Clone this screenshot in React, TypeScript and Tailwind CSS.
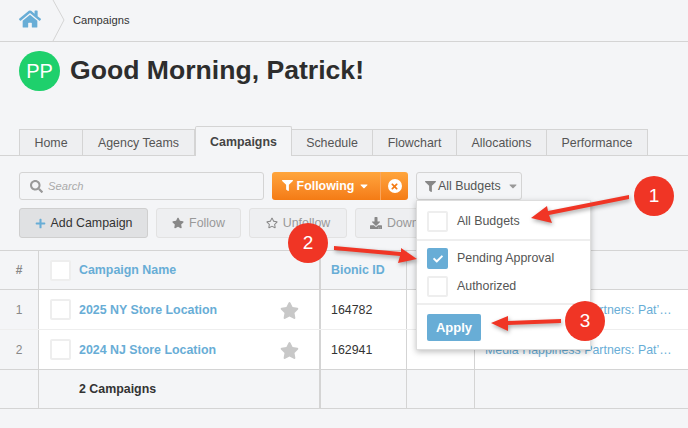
import React from 'react';
import { FaHome, FaFilter, FaSearch, FaPlus, FaStar, FaRegStar, FaDownload, FaCheck, FaTimes, FaCaretDown } from 'react-icons/fa';

const TABS = [
  { label: 'Home', w: 'w-[64px]' },
  { label: 'Agency Teams', w: 'w-[112px]' },
  { label: 'Campaigns', w: 'w-[97px]' },
  { label: 'Schedule', w: 'w-[81px]' },
  { label: 'Flowchart', w: 'w-[84px]' },
  { label: 'Allocations', w: 'w-[90px]' },
  { label: 'Performance', w: 'w-[101px]' },
];

const ROWS = [
  { n: 1, name: '2025 NY Store Location', id: '164782' },
  { n: 2, name: '2024 NJ Store Location', id: '162941' },
];

const COLS = 'grid grid-cols-[39px_282px_86px_68px_1fr]';
const AGENCY = 'Media Happiness Partners: Pat’…';

const Check = ({ on = false }: { on?: boolean }) => (
  <div className={`w-[21px] h-[21px] shrink-0 rounded-[2px] flex items-center justify-center border-2 ${on ? 'bg-[#68add6] border-[#68add6]' : 'bg-white border-[#eeeeee]'}`}>
    {on && <FaCheck className="text-white text-[10px]" />}
  </div>
);

const Badge = ({ n, x, y }: { n: number; x: string; y: string }) => (
  <div className={`absolute ${x} ${y} w-10 h-10 rounded-full bg-[#f03525] text-white text-[19px] flex items-center justify-center`}>{n}</div>
);

export default function App() {
  return (
    <div className="relative w-[688px] h-[428px] overflow-hidden bg-[#f4f5f7] text-[#333] text-[12.4px] font-['Liberation_Sans',Arial,sans-serif]">
      {/* Breadcrumb */}
      <div className="h-[42px] border-b border-[#d4d4d4] flex items-center">
        <div className="w-[53px] h-full flex items-center pl-[19px] relative">
          <FaHome className="text-[#68add6] text-[22px] -mt-[4px]" />
          <svg className="absolute left-[52px] top-0" width="14" height="41" viewBox="0 0 14 41" fill="none">
            <path d="M1 0L12 20L1 41" stroke="#d4d4d4" strokeWidth="1" />
          </svg>
        </div>
        <span className="ml-5 text-[11.2px] text-[#333]">Campaigns</span>
      </div>

      {/* Greeting */}
      <div className="h-[84px] pl-[19px] pt-[9px] flex items-start gap-[10px]">
        <div className="w-[41px] h-10 rounded-full bg-[#1ed06c] text-white text-[20px] flex items-center justify-center">PP</div>
        <h1 className="text-[26.6px] leading-[38px] font-bold text-[#2d2d2d]">Good Morning, Patrick!</h1>
      </div>

      {/* Tabs */}
      <div className="h-[30px] border-b border-[#d4d4d4] pl-[19px] flex items-end">
        {TABS.map((t) => t.label === 'Campaigns' ? (
          <div key={t.label} className={`${t.w} h-[30px] -mb-px pt-[2px] bg-[#f4f5f7] border border-b-0 border-[#d4d4d4] rounded-t-[2px] flex items-center justify-center font-bold text-[#444]`}>{t.label}</div>
        ) : (
          <div key={t.label} className={`${t.w} h-[26px] pt-[2px] bg-[#eeeff1] border border-l-0 first:border-l border-b-0 border-[#d4d4d4] flex items-center justify-center text-[#555]`}>{t.label}</div>
        ))}
      </div>

      {/* Filters */}
      <div className="pl-[19px] pt-[16px] flex items-start">
        <div className="w-[245px] h-[28px] bg-[#f4f5f7] border border-[#d4d4d4] rounded-[3px] flex items-center pl-[10px] gap-[5px]">
          <FaSearch className="text-[#999] text-[13px]" />
          <span className="italic text-[#aaa] text-[11.2px]">Search</span>
        </div>
        <div className="ml-2 h-[28px] w-[136px] rounded-[3px] bg-gradient-to-b from-[#ffa53c] to-[#f47b14] text-white font-bold flex items-center">
          <div className="flex-1 flex items-center justify-center gap-1">
            <FaFilter className="text-[11px]" />
            <span>Following</span>
            <FaCaretDown className="text-[12px]" />
          </div>
          <div className="w-[28px] h-full border-l border-[#f9a65e] flex items-center justify-center">
            <div className="w-[14px] h-[14px] rounded-full bg-white flex items-center justify-center">
              <FaTimes className="text-[#f47b14] text-[9px]" />
            </div>
          </div>
        </div>
        <div className="ml-2 h-[28px] w-[106px] bg-[#f4f5f7] border border-[#d4d4d4] rounded-[3px] flex items-center pl-2 text-[#555] gap-[2px] whitespace-nowrap">
          <FaFilter className="text-[#888] text-[11px]" />
          <span>All Budgets</span>
          <FaCaretDown className="ml-1 text-[#999] text-[12px]" />
        </div>
      </div>

      {/* Actions */}
      <div className="pl-[19px] pt-[8px] flex gap-2">
        <div className="w-[129px] h-[30px] bg-[#e0e1e3] border border-[#cfcfcf] rounded-[3px] flex items-center justify-center gap-[5px] text-[#333]">
          <FaPlus className="text-[#68add6] text-[11px]" />
          <span>Add Campaign</span>
        </div>
        <div className="w-[85px] h-[30px] bg-[#eeeff1] border border-[#e2e2e2] rounded-[3px] flex items-center justify-center gap-[5px] text-[#999]">
          <FaStar className="text-[#888] text-[12px]" />
          <span>Follow</span>
        </div>
        <div className="w-[98px] h-[30px] bg-[#eeeff1] border border-[#e2e2e2] rounded-[3px] flex items-center justify-center gap-[5px] text-[#999]">
          <FaRegStar className="text-[#888] text-[12px]" />
          <span>Unfollow</span>
        </div>
        <div className="w-[100px] h-[30px] bg-[#eeeff1] border border-[#e2e2e2] rounded-[3px] flex items-center pl-[14px] gap-[5px] text-[#999]">
          <FaDownload className="text-[#888] text-[12px]" />
          <span>Download</span>
        </div>
      </div>

      {/* Table */}
      <div className="mt-[12px] border-t border-b border-[#d4d4d4] font-normal">
        <div className={`${COLS} h-[39px] border-b border-[#d4d4d4]`}>
          <div className="border-r border-[#d4d4d4] flex items-center justify-center text-[#888] text-xs font-bold">#</div>
          <div className="border-r-2 border-[#d4d4d4] pl-[11px] flex items-center gap-[8px]">
            <Check />
            <span className="font-bold text-[#68add6]">Campaign Name</span>
          </div>
          <div className="border-r border-[#d4d4d4] pl-[10px] flex items-center font-bold text-[#68add6]">Bionic ID</div>
          <div className="border-r border-[#d4d4d4]" />
          <div />
        </div>
        {ROWS.map((r) => (
          <div key={r.n} className={`${COLS} h-[40px] border-b border-[#eeeeee]`}>
            <div className="border-r border-[#d4d4d4] flex items-center justify-center text-[#888] text-xs">{r.n}</div>
            <div className="border-r-2 border-[#d4d4d4] bg-white pl-[11px] pr-[20px] flex items-center gap-[8px]">
              <Check />
              <span className="pt-px font-bold text-[#68add6]">{r.name}</span>
              <FaStar className="ml-auto mt-px text-[#c8c8c8] text-[19px]" />
            </div>
            <div className="border-r border-[#d4d4d4] bg-white pl-[10px] pt-px flex items-center">{r.id}</div>
            <div className="border-r border-[#d4d4d4] bg-white" />
            <div className="bg-white pl-[10px] pt-px flex items-center text-[#68add6] whitespace-nowrap">{AGENCY}</div>
          </div>
        ))}
        <div className={`${COLS} h-[39px] border-t border-[#d4d4d4] -mt-px`}>
          <div className="border-r border-[#d4d4d4]" />
          <div className="border-r-2 border-[#d4d4d4] pl-[40px] pt-px flex items-center font-bold">2 Campaigns</div>
          <div className="border-r border-[#d4d4d4]" />
          <div className="border-r border-[#d4d4d4]" />
          <div />
        </div>
      </div>

      {/* Budget dropdown */}
      <div className="absolute left-[416px] top-[200px] w-[175px] bg-white border border-[#dddddd] shadow-[0_2px_6px_rgba(0,0,0,0.25)] text-[#555]">
        <div className="h-[40px] pl-[10px] pt-[2px] flex items-center gap-[9px] border-b-2 border-[#eeeeee]">
          <Check />
          <span>All Budgets</span>
        </div>
        <div className="h-[29px] mt-[3px] pl-[10px] flex items-center gap-[9px]">
          <Check on />
          <span>Pending Approval</span>
        </div>
        <div className="h-[26px] pl-[10px] flex items-center gap-[9px]">
          <Check />
          <span>Authorized</span>
        </div>
        <div className="border-t-2 border-[#eeeeee] mt-[4px] h-[46px] pl-[10px] pt-[9px]">
          <div className="w-[54px] h-[27px] rounded-[2px] bg-[#68add6] text-white font-bold flex items-center justify-center text-[13px]">Apply</div>
        </div>
      </div>

      {/* Annotations */}
      <svg className="absolute left-0 top-0 pointer-events-none" width="688" height="428" viewBox="0 0 688 428" fill="#f03525">
        <g style={{ filter: 'drop-shadow(1px 2px 2px rgba(0,0,0,0.35))' }}>
          <path d="M629 195L629 199L549 215L552 223L531 218L547 206L548 211Z" />
          <path d="M334 246L334 250L400 256L398 263L417 259L401 248L401 252Z" />
          <path d="M561 319L561 323L508 325L508 331L491 323L508 316L508 321Z" />
        </g>
      </svg>
      <Badge n={1} x="left-[634px]" y="top-[176px]" />
      <Badge n={2} x="left-[288px]" y="top-[223px]" />
      <Badge n={3} x="left-[565px]" y="top-[301px]" />
    </div>
  );
}
